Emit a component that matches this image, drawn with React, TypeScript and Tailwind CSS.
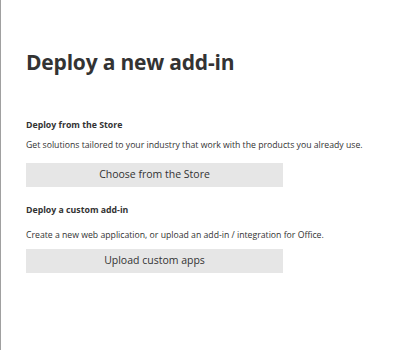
export default function App() {
    return (
        <div
            className="h-[350px] w-[404px] border-l border-[#a0a0a0] bg-white pl-[25px] text-[#333333]"
            style={{ fontFamily: '"Open Sans", "Noto Sans", sans-serif' }}
        >
            <h1 className="pt-[47px] text-[21px] leading-[30px] font-bold tracking-[-0.2px] text-[#333333]">
                Deploy a new add-in
            </h1>

            {/* Store */}
            <section className="mt-[42px]">
                <h2 className="text-[8.75px] leading-[12px] font-bold">Deploy from the Store</h2>
                <p className="mt-[8px] text-[8.7px] leading-[12px]">
                    Get solutions tailored to your industry that work with the products you already use.
                </p>
                <button className="mt-[12px] flex h-[24px] w-[257px] items-center justify-center bg-[#e6e6e6] text-[10.5px] text-[#333333]">
                    Choose from the Store
                </button>
            </section>

            {/* Custom */}
            <section className="mt-[17px]">
                <h2 className="text-[8.75px] leading-[12px] font-bold">Deploy a custom add-in</h2>
                <p className="mt-[13px] text-[8.7px] leading-[12px]">
                    Create a new web application, or upload an add-in / integration for Office.
                </p>
                <button className="mt-[8px] flex h-[24px] w-[257px] items-center justify-center bg-[#e6e6e6] text-[10.5px] text-[#333333]">
                    Upload custom apps
                </button>
            </section>
        </div>
    )
}
